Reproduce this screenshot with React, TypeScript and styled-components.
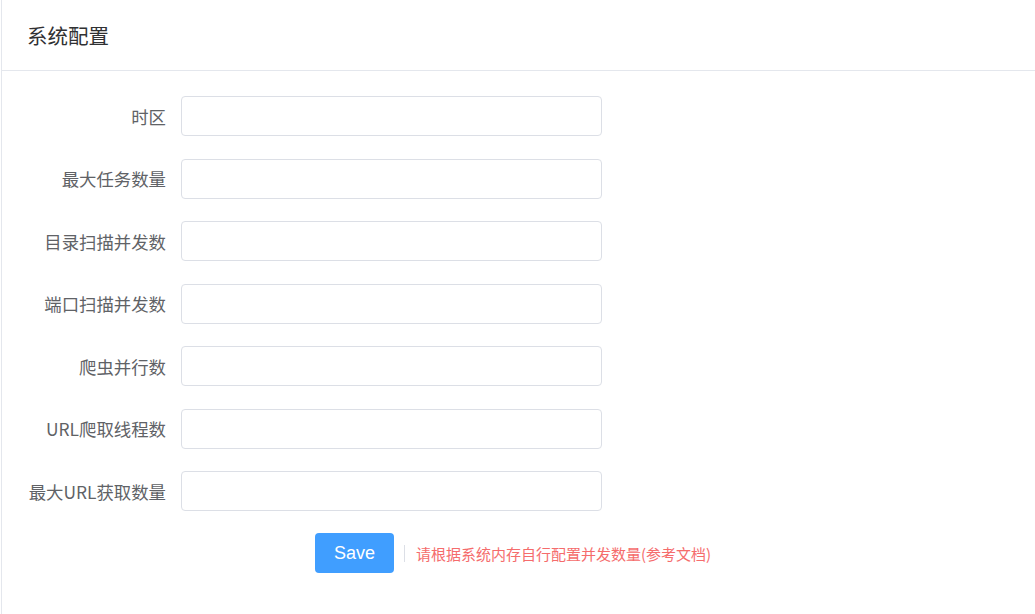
import styled, { createGlobalStyle } from "styled-components";

const GlobalStyle = createGlobalStyle`
  html, body {
    margin: 0;
    padding: 0;
    background: #ffffff;
    overflow: hidden;
  }
  body {
    font-family: "Noto Sans CJK SC", "Liberation Sans", sans-serif;
  }
`;

const Card = styled("div")`
  margin: -1px -20px 0 1px;
  height: 640px;
  border: 1px solid #e4e7ed;
  background: #ffffff;
`;

const Header = styled("div")`
  display: flex;
  align-items: center;
  height: 70px;
  padding: 0 25px;
  border-bottom: 1px solid #e4e7ed;
  font-size: 20.5px;
  color: #303133;
`;

const Body = styled("div")`
  padding-top: 25px;
`;

const Row = styled("div")`
  display: grid;
  grid-template-columns: 164px 421px;
  column-gap: 15px;
  align-items: center;
  height: 40px;
  margin-bottom: 22.5px;
`;

const Label = styled("label")`
  text-align: right;
  white-space: nowrap;
  font-size: 17.4px;
  color: #606266;
`;

const Input = styled("input")`
  box-sizing: border-box;
  width: 100%;
  height: 40px;
  padding: 0 15px;
  border: 1px solid #dcdfe6;
  border-radius: 4px;
  background: #ffffff;
  font-size: 16px;
  color: #606266;
  outline: none;
`;

const Actions = styled("div")`
  display: flex;
  align-items: center;
  padding-left: 313px;
  margin-top: -0.5px;
`;

const SaveButton = styled("button")`
  width: 79px;
  height: 40px;
  border: none;
  border-radius: 4px;
  background: #409eff;
  color: #ffffff;
  font-family: "Liberation Sans", Arial, sans-serif;
  font-size: 18px;
  cursor: pointer;
`;

const Divider = styled("span")`
  width: 1px;
  height: 17px;
  margin: 0 11px 0 10px;
  background: #dcdfe6;
`;

const Hint = styled("span")`
  font-size: 15px;
  color: #f56c6c;
  white-space: nowrap;
`;

const fields = [
  "时区",
  "最大任务数量",
  "目录扫描并发数",
  "端口扫描并发数",
  "爬虫并行数",
  "URL爬取线程数",
  "最大URL获取数量",
];

export default function App() {
  return (
    <>
      <GlobalStyle />
      <Card>
        <Header>系统配置</Header>
        <Body>
          {fields.map((name) => (
            <Row key={name}>
              <Label>{name}</Label>
              <Input type="text" />
            </Row>
          ))}
          <Actions>
            <SaveButton>Save</SaveButton>
            <Divider />
            <Hint>请根据系统内存自行配置并发数量(参考文档)</Hint>
          </Actions>
        </Body>
      </Card>
    </>
  );
}
